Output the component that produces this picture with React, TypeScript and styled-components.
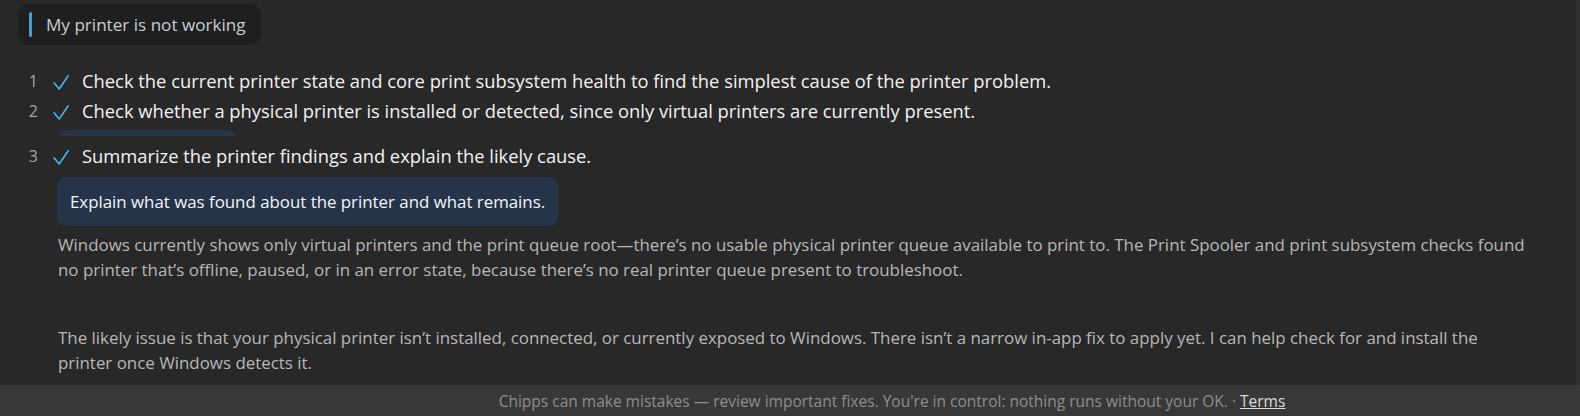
import React from "react";
import styled, { createGlobalStyle } from "styled-components";

const Global = createGlobalStyle`
  html, body { margin: 0; padding: 0; background: #282828; }
  body { font-family: "Open Sans", "Noto Sans", sans-serif; }
  * { box-sizing: border-box; }
`;

const Shell = styled.div`
  width: 1580px;
  height: 416px;
  display: flex;
  flex-direction: column;
  background: #282828;
  overflow: hidden;
`;

const Body = styled.div`
  flex: 1;
  display: flex;
  min-height: 0;
`;

const Main = styled.main`
  flex: 1;
  padding: 4px 0 0 18px;
  overflow: hidden;
`;

const Scrollbar = styled.div`
  width: 4px;
  background: #313131;
`;

const Chip = styled.div`
  display: inline-flex;
  align-items: center;
  height: 41px;
  padding: 0 15px 0 11px;
  gap: 14px;
  border-radius: 11px;
  background: #1f1f1f;
  color: #c9cdd2;
  font-size: 17.1px;
`;

const ChipBar = styled.span`
  width: 3px;
  height: 25px;
  border-radius: 2px;
  background: #4a9fd0;
`;

const Steps = styled.ol`
  list-style: none;
  margin: 21px 0 0;
  padding: 0;
`;

const StepRow = styled.li`
  display: grid;
  grid-template-columns: 33px 31px 1fr;
  align-items: start;
  height: 30px;
  line-height: 30px;
`;

const StepNum = styled.span`
  text-align: right;
  padding-right: 13px;
  color: #a6a6a6;
  font-size: 16px;
`;

const CheckIcon = styled.svg`
  margin: 9px 0 0 2px;
  display: block;
`;

const StepText = styled.span`
  color: #f2f2f2;
  font-size: 18.35px;
  white-space: nowrap;
`;

const Clip = styled.div<{ $h: number }>`
  height: ${(p) => p.$h}px;
  overflow: hidden;
  margin: 4px 0 5px 40px;
`;

const Bubble = styled.div<{ $w?: number }>`
  display: inline-block;
  ${(p) => (p.$w ? `width: ${p.$w}px;` : "")}
  padding: 0 13px;
  height: 49px;
  line-height: 49px;
  border-radius: 9px;
  background: #253449;
  color: #f4f6f8;
  font-size: 16.85px;
  white-space: nowrap;
`;

const BubbleWrap = styled.div`
  margin: 6px 0 0 39px;
`;

const Para = styled.p`
  margin: 6px 0 0 40px;
  width: 1472px;
  color: #b7b7b7;
  font-size: 16.9px;
  line-height: 25px;
  & + & {
    margin-top: 43px;
  }
`;

const Footer = styled.footer`
  height: 31px;
  background: #383838;
  display: flex;
  align-items: center;
  justify-content: center;
  padding-left: 204px;
  color: #8e8e8e;
  font-size: 15.5px;
`;

const TermsLink = styled.a`
  color: #dcdcdc;
  text-decoration: underline;
  margin-left: 4px;
`;

const Check = () => (
  <CheckIcon width="16" height="15" viewBox="0 0 16 15">
    <polyline
      points="1,7.8 6.2,14 15.2,0.8"
      fill="none"
      stroke="#45b4f2"
      strokeWidth="1.6"
      strokeLinecap="round"
      strokeLinejoin="round"
    />
  </CheckIcon>
);

const steps = [
  "Check the current printer state and core print subsystem health to find the simplest cause of the printer problem.",
  "Check whether a physical printer is installed or detected, since only virtual printers are currently present.",
];

export default function App() {
  return (
    <Shell>
      <Global />
      <Body>
        <Main>
          <Chip>
            <ChipBar />
            My printer is not working
          </Chip>
          <Steps>
            {steps.map((s, i) => (
              <StepRow key={i}>
                <StepNum>{i + 1}</StepNum>
                <Check />
                <StepText>{s}</StepText>
              </StepRow>
            ))}
            <Clip $h={6}>
              <Bubble $w={179} aria-hidden="true" />
            </Clip>
            <StepRow>
              <StepNum>3</StepNum>
              <Check />
              <StepText>Summarize the printer findings and explain the likely cause.</StepText>
            </StepRow>
          </Steps>
          <BubbleWrap>
            <Bubble>Explain what was found about the printer and what remains.</Bubble>
          </BubbleWrap>
          <Para>
            Windows currently shows only virtual printers and the print queue root—there’s no usable physical printer
            queue available to print to. The Print Spooler and print subsystem checks found no printer that’s offline,
            paused, or in an error state, because there’s no real printer queue present to troubleshoot.
          </Para>
          <Para>
            The likely issue is that your physical printer isn’t installed, connected, or currently exposed to Windows.
            There isn’t a narrow in-app fix to apply yet. I can help check for and install the printer once Windows
            detects it.
          </Para>
        </Main>
        <Scrollbar />
      </Body>
      <Footer>
        Chipps can make mistakes — review important fixes. You're in control: nothing runs without your OK. ·
        <TermsLink href="#">Terms</TermsLink>
      </Footer>
    </Shell>
  );
}
